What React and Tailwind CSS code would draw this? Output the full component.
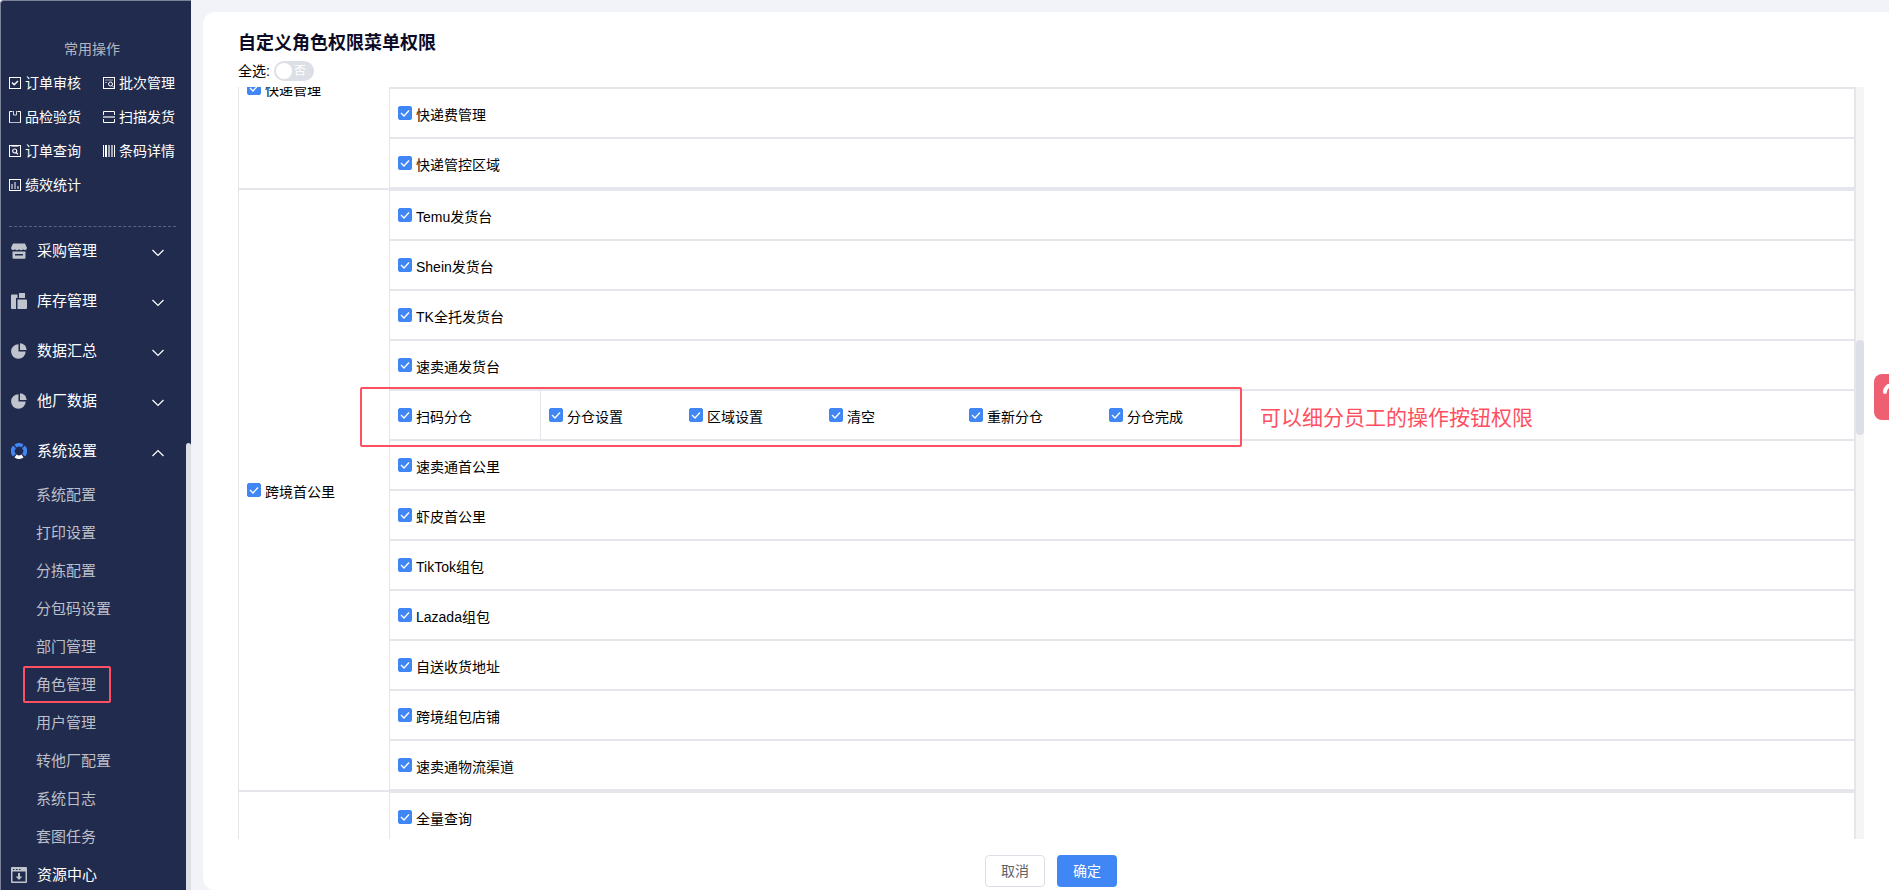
import { useState } from 'react'

const quickLinks = [
  { label: '订单审核', icon: 'check' },
  { label: '批次管理', icon: 'batch' },
  { label: '品检验货', icon: 'box' },
  { label: '扫描发货', icon: 'scan' },
  { label: '订单查询', icon: 'search' },
  { label: '条码详情', icon: 'barcode' },
  { label: '绩效统计', icon: 'stats' },
]

const menus = [
  { label: '采购管理', icon: 'shop' },
  { label: '库存管理', icon: 'stock' },
  { label: '数据汇总', icon: 'pie' },
  { label: '他厂数据', icon: 'pie' },
  { label: '系统设置', icon: 'ring', open: true },
]

const settings = [
  '系统配置',
  '打印设置',
  '分拣配置',
  '分包码设置',
  '部门管理',
  '角色管理',
  '用户管理',
  '转他厂配置',
  '系统日志',
  '套图任务',
]

const groups = [
  {
    label: '快递管理',
    // first two rows are scrolled out of view
    rows: [{}, {}, { label: '快递费管理' }, { label: '快递管控区域' }],
  },
  {
    label: '跨境首公里',
    rows: [
      { label: 'Temu发货台' },
      { label: 'Shein发货台' },
      { label: 'TK全托发货台' },
      { label: '速卖通发货台' },
      {
        label: '扫码分仓',
        actions: ['分仓设置', '区域设置', '清空', '重新分仓', '分仓完成'],
        note: '可以细分员工的操作按钮权限',
      },
      { label: '速卖通首公里' },
      { label: '虾皮首公里' },
      { label: 'TikTok组包' },
      { label: 'Lazada组包' },
      { label: '自送收货地址' },
      { label: '跨境组包店铺' },
      { label: '速卖通物流渠道' },
    ],
  },
  {
    rows: [{ label: '全量查询' }, {}],
  },
]

function QuickIcon({ name }) {
  return (
    <svg width="12" height="12" viewBox="0 0 12 12" fill="none" stroke="white" className="shrink-0">
      {name === 'box' && (
        <>
          <path d="M3.500 0.500h-3v11M8.500 0.500h3v11" />
          <path d="M0 11.500h12" strokeOpacity="0.7" />
          <path d="M4.500 0v4h3V0" strokeOpacity="0.8" />
        </>
      )}
      {name === 'scan' && (
        <>
          <path d="M0.500 4V0.500h11V4M0.500 8v3.500h11V8" />
          <path d="M0 6h12" strokeOpacity="0.6" strokeWidth="2" />
        </>
      )}
      {!['box', 'scan', 'barcode'].includes(name) && <rect x="0.5" y="0.5" width="11" height="11" />}
      {name === 'check' && <path d="M3 5.500l2.200 2.200L9 4" strokeWidth="1.4" />}
      {name === 'batch' && (
        <>
          <path d="M2 3h8M2 5.500h2" strokeOpacity="0.6" />
          <circle cx="7.5" cy="7" r="2" />
          <path d="M9 8.500l2 2" />
        </>
      )}
      {name === 'search' && (
        <>
          <path d="M2.500 1.500h7" strokeOpacity="0.6" />
          <circle cx="5.7" cy="6" r="2" strokeWidth="1.2" />
          <path d="M7.200 7.500L9 9.300" strokeWidth="1.2" />
        </>
      )}
      {name === 'barcode' && (
        <>
          <path d="M0.500 0v12M11.500 0v12" />
          <path d="M3 0v12" strokeWidth="2" />
          <path d="M6 0v12M9 0v12" strokeOpacity="0.6" strokeWidth="2" />
        </>
      )}
      {name === 'stats' && (
        <path d="M3 10V5M6 10V3M9 10V7" strokeOpacity="0.5" strokeWidth="2" />
      )}
    </svg>
  )
}

function MenuIcon({ name }) {
  return (
    <svg width="16" height="16" viewBox="0 0 16 16" fill="#c0c4cc" className="shrink-0">
      {name === 'shop' && (
        <>
          <path d="M2 0.5h12L16 5a2.3 2.3 0 0 1-4 1.2 2.6 2.6 0 0 1-4 0 2.6 2.6 0 0 1-4 0A2.3 2.3 0 0 1 0 5z" />
          <path fillRule="evenodd" d="M1.5 8.5h13v6.2a1 1 0 0 1-1 1h-11a1 1 0 0 1-1-1zM4 11v1.600h8V11z" />
        </>
      )}
      {name === 'stock' && (
        <>
          <path d="M1 1.500h5.500V5H5v11H1a1 1 0 0 1-1-1v-12.500a1 1 0 0 1 1-1z" />
          <path d="M8 0h6v5H8zM6.500 6.500H15a1 1 0 0 1 1 1V15a1 1 0 0 1-1 1H6.500z" />
        </>
      )}
      {name === 'pie' && (
        <>
          <path d="M7.500 1.200V8.500H14.700A7.300 7.300 0 1 1 7.500 1.200z" />
          <path d="M9 0.300A7 7 0 0 1 15.700 7H9z" />
        </>
      )}
      {name === 'ring' && (
        <g fill="none" strokeWidth="4">
          <path d="M3.500 12.200a6 6 0 0 1 0-8.400M12.500 3.800a6 6 0 0 1 0 8.400" stroke="#4086f5" />
          <path d="M4.500 3a6 6 0 0 1 7 0" stroke="#4086f5" strokeWidth="3.5" />
          <path d="M4.500 13a6 6 0 0 0 7 0" stroke="white" strokeWidth="3.5" />
        </g>
      )}
      {name === 'source' && (
        <>
          <path fillRule="evenodd" d="M1 0h14a1 1 0 0 1 1 1v14a1 1 0 0 1-1 1H1a1 1 0 0 1-1-1V1a1 1 0 0 1 1-1zM1.500 4.500v10h13v-10zM2 2v1h1.500V2zM5 2v1h1.500V2zM8 2v1h1.500V2z" />
          <path d="M7 6h2v3.500h2.400L8 12.900 4.600 9.500H7z" />
        </>
      )}
    </svg>
  )
}

function Chevron({ up }) {
  return (
    <svg width="12" height="8" viewBox="0 0 12 8" fill="none" stroke="white" strokeWidth="1.2" className="mt-1">
      <path d={up ? 'M0.500 7L6 1.500 11.500 7' : 'M0.500 1L6 6.500 11.500 1'} />
    </svg>
  )
}

function Check({ label }) {
  const [checked, setChecked] = useState(true)

  return (
    <label className="flex items-center text-sm leading-5 text-black cursor-pointer">
      <span className="grid shrink-0">
        <input
          type="checkbox"
          checked={checked}
          onChange={() => setChecked(!checked)}
          className="peer col-start-1 row-start-1 appearance-none w-3.5 h-3.5 rounded-xs border border-[#dcdfe6] bg-white checked:border-[#4086f5] checked:bg-[#4086f5]"
        />
        <svg width="14" height="14" viewBox="0 0 14 14" fill="none" stroke="white" strokeWidth="1.3" className="col-start-1 row-start-1 pointer-events-none invisible peer-checked:visible">
          <path d="M3 7l3 3 5-5.500" />
        </svg>
      </span>
      <span className="pl-1 pt-1">{label}</span>
    </label>
  )
}

function Sidebar() {
  return (
    <aside className="relative w-[191px] shrink-0 overflow-hidden rounded-tl-sm border-l border-t border-[#7d8397] bg-[#212b4d]">
      <div className="px-2 pt-9">
        <p className="h-6 pr-3 pl-1 text-center text-sm leading-6 text-[#b3b7c2]">常用操作</p>
        <nav className="grid grid-cols-[94px_1fr] pt-[5px] pb-6">
          {quickLinks.map(({ label, icon }) => (
            <a key={label} href="#" className="flex h-[34px] items-center gap-1 text-sm whitespace-nowrap text-white">
              <QuickIcon name={icon} />
              {label}
            </a>
          ))}
        </nav>
      </div>
      <div className="mr-[15px] ml-2 border-t border-dashed border-[#5c647d]" />

      <nav className="-mt-px">
        {menus.map(({ label, icon, open }) => (
          <button key={label} type="button" className="flex h-[50px] w-full items-center pr-[27px] pl-2.5 text-[15px] text-white">
            <MenuIcon name={icon} />
            <span className="flex-1 pl-2.5 text-left">{label}</span>
            <Chevron up={open} />
          </button>
        ))}
        {settings.map((label) => (
          <a key={label} href="#" className="relative flex h-[38px] items-center pl-[35px] text-[15px] text-[#bcbfca]">
            {label}
            {label === '角色管理' && (
              <span className="absolute top-0 left-[22px] h-[37px] w-[88px] rounded-xs border-2 border-[#ff5062]" />
            )}
          </a>
        ))}
        <button type="button" className="flex h-[38px] w-full items-center pl-2.5 text-[15px] text-white">
          <MenuIcon name="source" />
          <span className="pl-2.5">资源中心</span>
        </button>
      </nav>

      <div className="absolute top-[442px] right-0 bottom-0 w-[5px] rounded-t-sm bg-[#dcdfe6]" />
    </aside>
  )
}

function Row({ label, actions, note }) {
  return (
    <div className="relative flex h-[50px] border border-[#e5e6eb]">
      {label && (
        <div className="flex w-[150px] shrink-0 items-center pl-2">
          <Check label={label} />
        </div>
      )}
      {actions && (
        <div className="flex items-center border-l border-[#e5e6eb] pl-2">
          {actions.map((action) => (
            <div key={action} className="w-[140px]">
              <Check label={action} />
            </div>
          ))}
        </div>
      )}
      {note && (
        <>
          <div className="pointer-events-none absolute -top-1 -left-[30px] z-10 h-[60px] w-[882px] rounded-xs border-2 border-[#ff5062]" />
          <p className="absolute top-[11px] left-[870px] text-[21px] leading-8 whitespace-nowrap text-[#ff5062]">{note}</p>
        </>
      )}
    </div>
  )
}

export default function App() {
  const [all, setAll] = useState(false)

  return (
    <div className="relative flex h-screen overflow-hidden bg-[#f2f3f8] font-['Liberation_Sans','Noto_Sans_CJK_SC',sans-serif]">
      <Sidebar />

      <main className="mt-3 ml-3 flex min-w-0 flex-1 flex-col rounded-l-xl bg-white pr-[25px] pl-[35px]">
        <h1 className="pt-[17px] text-lg leading-7 font-bold text-[#0b0b26]">自定义角色权限菜单权限</h1>
        <div className="flex h-[30px] items-center gap-1 pb-0.5 text-sm text-black">
          <label htmlFor="select-all">全选:</label>
          <span className="grid items-center">
            <input
              id="select-all"
              type="checkbox"
              role="switch"
              checked={all}
              onChange={() => setAll(!all)}
              className="col-start-1 row-start-1 h-5 w-10 appearance-none rounded-full bg-[#dcdfe6] checked:bg-[#4086f5]"
            />
            <span className="pointer-events-none col-start-1 row-start-1 flex items-center gap-0.5 pl-0.5 text-xs leading-5 text-white">
              <span className="h-4 w-4 rounded-full bg-white" />
              否
            </span>
          </span>
        </div>

        <div className="flex min-h-0 flex-1">
          <div className="min-w-0 flex-1 overflow-hidden">
            <div className="-mt-[100px]">
              {groups.map((group, i) => (
                <section key={i} className="flex border border-[#e5e6eb]">
                  <div className="flex w-[150px] shrink-0 items-center pl-2">
                    {group.label && <Check label={group.label} />}
                  </div>
                  <div className="min-w-0 flex-1">
                    {group.rows.map((row, j) => (
                      <Row key={j} {...row} />
                    ))}
                  </div>
                </section>
              ))}
            </div>
          </div>
          <div className="w-2 shrink-0 bg-[#f5f5f5] pt-[253px]">
            <div className="h-[95px] rounded-full bg-[#dcdfe6]" />
          </div>
        </div>

        <footer className="flex h-[51px] shrink-0 items-start justify-center gap-3 pt-4 text-sm">
          <button type="button" className="h-8 w-[60px] rounded border border-[#dcdfe6] bg-white text-[#606266]">
            取消
          </button>
          <button type="button" className="h-8 w-[60px] rounded bg-[#4086f5] text-white">
            确定
          </button>
        </footer>
      </main>

      <button type="button" aria-label="客服" className="absolute top-[374px] right-0 flex h-[46px] w-[15px] items-start overflow-hidden rounded-l-lg bg-[#ee6071] pt-2.5 pl-2">
        <svg width="24" height="24" viewBox="0 0 24 24" fill="none" stroke="white" strokeWidth="4" strokeLinecap="round" className="shrink-0">
          <path d="M3 8a7 7 0 0 1 14 0" />
        </svg>
      </button>
    </div>
  )
}
